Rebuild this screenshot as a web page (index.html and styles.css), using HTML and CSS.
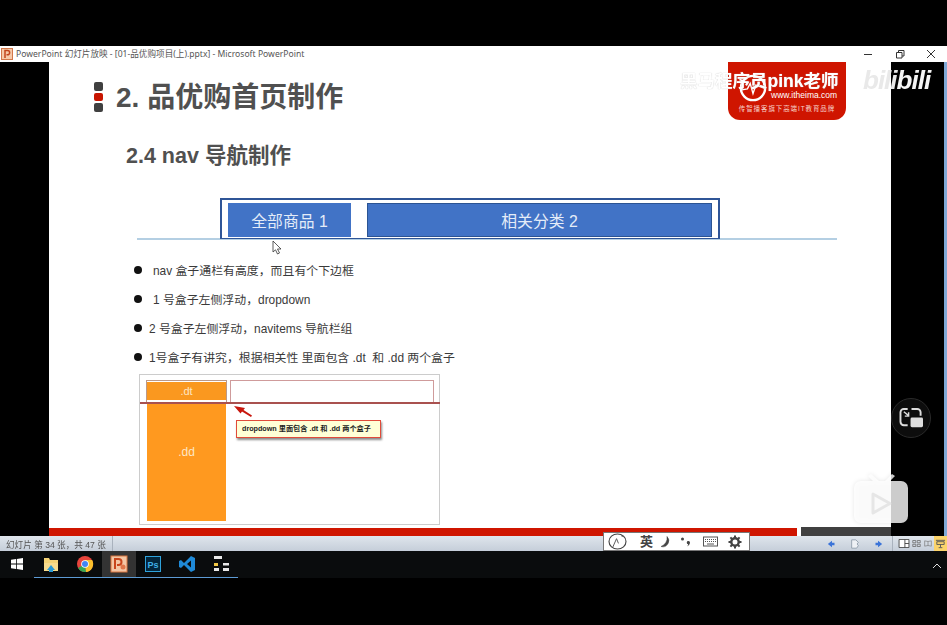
FILE: index.html
```html
<!DOCTYPE html>
<html lang="zh-CN">
<head>
<meta charset="utf-8">
<title>PowerPoint 幻灯片放映</title>
<link rel="stylesheet" href="styles.css">
</head>
<body>
<div class="screen">
  <div class="window">
    <header class="titlebar">
      <svg class="ppt-icon" viewBox="0 0 12 12"><rect x=".5" y=".5" width="11" height="11" fill="#f6c9a8" stroke="#d2774a"/><path d="M4 10V2.500h2.500a2 2 0 0 1 0 4.300H5.500" fill="none" stroke="#c2451c" stroke-width="1.500"/></svg>
      <span class="title-text">PowerPoint 幻灯片放映 - [01-品优购项目(上).pptx] - Microsoft PowerPoint</span>
      <div class="win-controls">
        <svg viewBox="0 0 10 10" class="win-btn"><path d="M1 5.500h8" stroke="#333" stroke-width="1"/></svg>
        <svg viewBox="0 0 10 10" class="win-btn"><path d="M1.500 3.500h5.500v5.500H1.500zM3.500 3.500V1.500H9v5.500H7" fill="none" stroke="#333"/></svg>
        <svg viewBox="0 0 10 10" class="win-btn"><path d="M1 1l8 8M9 1l-8 8" stroke="#333"/></svg>
      </div>
    </header>

    <div class="stage">
      <main class="slide">
        <div class="slide-head">
          <div class="marks"><i class="mark"></i><i class="mark mark-red"></i><i class="mark"></i></div>
          <h1 class="slide-title">2. 品优购首页制作</h1>
        </div>
        <h2 class="slide-sub">2.4 nav 导航制作</h2>

        <div class="nav-box">
          <div class="nav-item nav-item-a">全部商品 1</div>
          <div class="nav-item nav-item-b">相关分类 2</div>
        </div>
        <div class="rule"></div>

        <ul class="points">
          <li class="point point-wide">nav 盒子通栏有高度，而且有个下边框</li>
          <li class="point point-wide">1 号盒子左侧浮动，dropdown</li>
          <li class="point">2 号盒子左侧浮动，navitems 导航栏组</li>
          <li class="point">1号盒子有讲究，根据相关性 里面包含 .dt&nbsp; 和 .dd 两个盒子</li>
        </ul>

        <div class="diagram">
          <div class="diagram-top">
            <div class="dt-cell"><span class="dt">.dt</span></div>
            <div class="empty-cell"></div>
          </div>
          <div class="dd">.dd</div>
          <svg class="arrow" viewBox="0 0 19 12"><path d="M0 0L11 2 9.500 4 18 9.500 17 11 8 5.500 6.500 7.500z" fill="#c8170d"/></svg>
          <div class="callout">dropdown 里面包含 .dt 和 .dd 两个盒子</div>
        </div>

        <div class="slide-foot">
          <div class="foot-red"></div>
          <div class="foot-dark"></div>
        </div>

        <div class="logo">
          <div class="logo-row">
            <svg class="logo-mark" viewBox="0 0 30 30"><circle cx="15" cy="15" r="13" fill="none" stroke="#fff" stroke-width="2.500"/><path d="M3 17l6-1 3-6 3 11 3-9 9 3" fill="none" stroke="#fff" stroke-width="1.500"/></svg>
            <div class="logo-url">www.itheima.com</div>
          </div>
          <div class="logo-slogan">传智播客旗下高端IT教育品牌</div>
        </div>
      </main>
      <div class="side"></div>
      <div class="edge"></div>
    </div>

    <footer class="statusbar">
      <span class="status-text">幻灯片 第 34 张，共 47 张</span>
      <i class="status-sep"></i>
      <div class="status-right">
        <svg class="st-ico" viewBox="0 0 12 12"><path d="M1 6l5-4v2.500h3v3H6V10z" fill="#3b74d8"/></svg>
        <svg class="st-ico st-gap" viewBox="0 0 12 12"><path d="M2 1h5l3 3-1.500 2L10 8 8 11H2z" fill="#eef1f5" stroke="#8a97a6"/></svg>
        <svg class="st-ico st-gap" viewBox="0 0 12 12"><path d="M11 6L6 2v2.500H3v3h3V10z" fill="#3b74d8"/></svg>
        <i class="status-sep status-sep-r"></i>
        <svg class="st-view st-view-a" viewBox="0 0 12 10"><path d="M.5.500h11v9H.500zM7 .5v9M7 5h4.500" fill="#fff" stroke="#444"/></svg>
        <svg class="st-view st-view-b" viewBox="0 0 12 10"><path d="M1 1h4v3H1zM7 1h4v3H7zM1 6h4v3H1zM7 6h4v3H7z" fill="none" stroke="#666"/></svg>
        <svg class="st-view st-view-c" viewBox="0 0 12 10"><path d="M1 1l5 1 5-1v8L6 8 1 9zM6 2v6" fill="none" stroke="#777"/></svg>
        <div class="st-active"><svg viewBox="0 0 12 10"><path d="M1 1h10M2 2.500h8v3H2zM6 5.500v3M4 9h4" fill="none" stroke="#555"/></svg></div>
      </div>
    </footer>

    <nav class="taskbar">
      <div class="task task-start"><svg viewBox="0 0 12 12" class="t-ico-s"><path d="M0 1.800L5 1v4.600H0zM5.800.9L12 0v5.600H5.800zM0 6.400h5V11l-5-.8zM5.800 6.400H12V12l-6.200-.9z" fill="#fff"/></svg></div>
      <div class="task task-on"><svg viewBox="0 0 18 18" class="t-ico"><path d="M2 3h5l1 2h8v11H2z" fill="#f4d375"/><path d="M2 8h14v8H2z" fill="#f7dc8d"/><path d="M5 15l4-5 4 5z" fill="#2a9ad6"/><path d="M7 15h4v2H7z" fill="#2a9ad6"/></svg></div>
      <div class="task task-on"><svg viewBox="0 0 18 18" class="t-ico"><circle cx="9" cy="9" r="8" fill="#e8453c"/><path d="M9 9L2.100 13A8 8 0 0 0 10 17z" fill="#34a853"/><path d="M9 5h7.100A8 8 0 0 1 10 17z" fill="#fbc02d"/><circle cx="9" cy="9" r="3.800" fill="#fff"/><circle cx="9" cy="9" r="3" fill="#4285f4"/></svg></div>
      <div class="task task-on task-active"><svg viewBox="0 0 18 18" class="t-ico"><rect x="1" y="1" width="16" height="16" fill="#f3c6a5" stroke="#d8743f"/><path d="M5 14V4h3.500a3 3 0 0 1 0 6H7" fill="none" stroke="#c8451b" stroke-width="2"/><circle cx="13" cy="12" r="2.500" fill="#e0764a"/></svg></div>
      <div class="task task-on"><svg viewBox="0 0 18 18" class="t-ico"><rect x="1.500" y="1.500" width="15" height="15" fill="#03263c" stroke="#2fa3dc"/><text x="9" y="13" class="ps-text">Ps</text></svg></div>
      <div class="task task-on"><svg viewBox="0 0 18 18" class="t-ico"><path d="M13 1l4 2v12l-4 2-7-7-3 3-2-1V6l2-1 3 3zM13 5.500L9 9l4 3.500z" fill="#1f8ad8" fill-rule="evenodd"/></svg></div>
      <div class="task task-on"><svg viewBox="0 0 18 18" class="t-ico"><path d="M2 1h8v3H2zM2 13h5v3H2zM11 8h6v2.500h-6zM11 13h6v3h-6z" fill="#e8e8e8"/><path d="M2 8h4v3H2z" fill="#f2c744"/></svg></div>
      <svg class="tray-chevron" viewBox="0 0 10 6"><path d="M1 5l4-4 4 4" fill="none" stroke="#ddd"/></svg>
    </nav>
  </div>

  <div class="watermark">黑马程序员pink老师</div>
  <div class="bili"><span class="bili-a">bili</span><span class="bili-b">bili</span></div>

  <div class="pip">
    <svg viewBox="0 0 26 24" class="pip-ico"><path d="M9 2H5a3.500 3.500 0 0 0-3.500 3.500v10A3.500 3.500 0 0 0 5 19h4M13 2h6a3.500 3.500 0 0 1 3.500 3.500V9" fill="none" stroke="#ddd" stroke-width="2"/><path d="M5 5l5 4M10 5.500V9.500H6" fill="none" stroke="#ddd" stroke-width="1.500"/><rect x="12" y="11" width="13" height="10" rx="1.500" fill="#ddd"/></svg>
  </div>
  <svg class="tv" viewBox="0 0 54 50"><path d="M14 2l3-2 8 7h6l7-7 3 2-5 5h11a7 7 0 0 1 7 7v28a7 7 0 0 1-7 7H7a7 7 0 0 1-7-7V14a7 7 0 0 1 7-7h12z" fill="rgba(255,255,255,.8)"/><path d="M19 20l17 9.500L19 39z" fill="none" stroke="rgba(225,225,225,.8)" stroke-width="3" stroke-linejoin="round"/></svg>

  <svg class="cursor" viewBox="0 0 10 15"><path d="M1 1v11l2.500-2.200L5.500 14l2-1-2-4h3.500z" fill="#fff" stroke="#333" stroke-width=".8"/></svg>

  <div class="ime">
    <svg class="ime-logo" viewBox="0 0 20 18"><ellipse cx="10" cy="9" rx="9" ry="8" fill="none" stroke="#444" stroke-width="1.200"/><path d="M5 15L9 6l2 5M14 3l3 1" fill="none" stroke="#555"/></svg>
    <span class="ime-lang">英</span>
    <svg class="ime-ico" viewBox="0 0 12 12"><path d="M7 .5A6 6 0 0 1 1 10.500 9 9 0 0 0 7 .5z" fill="#444" stroke="#444" stroke-width=".5"/></svg>
    <svg class="ime-ico ime-semi" viewBox="0 0 12 12"><circle cx="2.500" cy="3" r="1.500" fill="#444"/><path d="M8.500 5a1.600 1.600 0 0 1 1.500 1.600C10 8.500 8.500 10 7 10.500c.8-.8 1.200-1.600 1.200-2.300A1.600 1.600 0 0 1 8.500 5z" fill="#444"/></svg>
    <svg class="ime-key" viewBox="0 0 15 10"><rect x=".5" y=".5" width="14" height="9" fill="none" stroke="#555"/><path d="M2 3h11M2 5h11" stroke="#555" stroke-dasharray="1 1"/><path d="M4 7.500h7" stroke="#555"/></svg>
    <svg class="ime-gear" viewBox="0 0 14 14"><circle cx="7" cy="7" r="3.700" fill="none" stroke="#444" stroke-width="2.400"/><path d="M7 .5v2.500M7 11v2.500M.5 7H3M11 7h2.500M2.400 2.400l1.800 1.800M9.800 9.800l1.800 1.800M2.400 11.600l1.800-1.800M9.800 4.200l1.800-1.800" stroke="#444" stroke-width="2"/></svg>
  </div>
</div>
</body>
</html>
```

FILE: styles.css
```css
* { box-sizing: border-box; }
html, body { margin: 0; padding: 0; background: #000; }
body { width: 947px; height: 625px; overflow: hidden; }
.screen {
  position: relative;
  width: 947px;
  height: 625px;
  padding-top: 46px;
  background: #000;
  overflow: hidden;
  font-family: "Liberation Sans", "Noto Sans CJK SC", sans-serif;
}
.window { display: flex; flex-direction: column; filter: blur(.45px); }

/* title bar */
.titlebar {
  height: 16px;
  display: flex;
  align-items: center;
  background: #fff;
  padding-left: 1px;
}
.ppt-icon { width: 12px; height: 12px; }
.title-text {
  margin-left: 3px;
  font: 8.600px/16px "Noto Sans", "Noto Sans CJK SC", sans-serif;
  color: #555;
  white-space: nowrap;
}
.win-controls { margin-left: auto; display: flex; gap: 21.500px; padding-right: 11px; }
.win-btn { width: 10px; height: 10px; }

/* stage */
.stage { display: flex; height: 474px; padding-left: 49px; }
.slide {
  position: relative;
  width: 842px;
  height: 474px;
  background: #fff;
  display: flex;
  flex-direction: column;
}
.side { width: 53px; background: #000; }
.edge { width: 3px; background: #7fa9d6; }

.slide-head { display: flex; align-items: center; margin: 20px 0 0 45px; height: 30px; }
.marks { display: flex; flex-direction: column; gap: 2px; }
.mark { width: 9px; height: 8.500px; border-radius: 2px; background: #404040; }
.mark-red { background: #c81500; }
.slide-title {
  margin: 2px 0 0 13px;
  font-size: 28px;
  line-height: 30px;
  font-weight: 700;
  color: #505050;
  white-space: nowrap;
}
.slide-sub {
  margin: 32px 0 0 77px;
  font-size: 21.500px;
  line-height: 24px;
  font-weight: 700;
  color: #505050;
}

.nav-box {
  margin: 30px 0 0 171px;
  width: 500px;
  height: 41px;
  border: 2px solid #2f5597;
  border-bottom-width: 1px;
  background: #fff;
  display: flex;
  gap: 16px;
  padding: 3px 6px 1px 6px;
  position: relative;
  z-index: 1;
}
.nav-item {
  display: flex;
  align-items: center;
  justify-content: center;
  color: #e4ecf8;
  font-size: 15.800px;
  background: #4173c6;
}
.nav-item-a { width: 123px; }
.nav-item-b { width: 345px; border: 1.500px solid #2b5493; }
.rule { margin: -1px 0 0 88px; width: 700px; height: 2px; background: #b4cfe3; }

.points { list-style: none; margin: 17px 0 0 85px; padding: 0; }
.point {
  position: relative;
  height: 29px;
  padding-left: 15px;
  font-size: 11.900px;
  line-height: 29px;
  color: #3a3a3a;
  white-space: nowrap;
}
.point::before {
  content: "";
  position: absolute;
  left: 0;
  top: 9px;
  width: 8px;
  height: 8px;
  border-radius: 50%;
  background: #111;
}
.point-wide { padding-left: 19px; }

.diagram {
  position: relative;
  margin: 1px 0 0 90px;
  width: 301px;
  height: 151px;
  border: 1px solid #ccc;
  background: #fff;
  padding-top: 5px;
}
.diagram-top {
  display: flex;
  gap: 3px;
  padding-left: 6px;
  height: 24px;
  border-bottom: 2px solid #a9514f;
  margin-right: -1px;
}
.dt-cell {
  width: 81px;
  height: 22px;
  border: 1px solid #b98;
  border-bottom: 0;
  padding: 1px 0;
}
.dt {
  display: block;
  height: 18px;
  background: #fa981f;
  color: #fde6c4;
  font-size: 11px;
  line-height: 18px;
  text-align: center;
}
.empty-cell { width: 204px; height: 22px; border: 1px solid #cf9b9b; border-bottom: 0; }
.dd {
  margin: 0 0 0 7px;
  width: 79px;
  height: 117px;
  background: #ff991f;
  color: #fde6c4;
  font-size: 12px;
  line-height: 96px;
  text-align: center;
}
.arrow { position: absolute; left: 94px; top: 31px; width: 19px; height: 12px; }
.callout {
  position: absolute;
  left: 96px;
  top: 45px;
  width: 145px;
  height: 18px;
  border: 1px solid #e04b3a;
  background: #ffffd6;
  box-shadow: 1px 2px 2px rgba(0,0,0,.45);
  font-size: 7.200px;
  font-weight: 700;
  line-height: 16px;
  padding-left: 5px;
  color: #222;
  white-space: nowrap;
}

.slide-foot { margin-top: auto; display: flex; align-items: flex-end; gap: 4px; }
.foot-red { width: 748px; height: 8px; background: #cf1500; }
.foot-dark { width: 90px; height: 9px; background: #404040; }

.logo {
  position: absolute;
  left: 679px;
  top: 0;
  width: 118px;
  height: 58px;
  background: #cf1500;
  border-radius: 0 0 12px 12px;
  color: #fff;
  padding-top: 18px;
}
.logo-row { display: flex; align-items: center; padding-left: 11px; height: 22px; }
.logo-mark { width: 28px; height: 28px; margin-top: -6px; flex: none; }
.logo-url { margin: 8px 0 0 4px; font-size: 8.500px; white-space: nowrap; }
.logo-slogan { font-size: 6.500px; letter-spacing: .9px; text-align: center; margin-top: 2px; color: #f6cfc8; white-space: nowrap; line-height: 10px; }

/* status bar */
.statusbar {
  height: 15px;
  display: flex;
  align-items: center;
  background: linear-gradient(#dfe5ec, #c5ced9);
  padding-left: 6px;
}
.status-text { font-size: 8.600px; color: #555; white-space: nowrap; width: 106px; }
.status-sep { width: 1px; height: 15px; background: #a9b2bd; }
.status-right { margin-left: auto; display: flex; align-items: center; }
.st-ico { width: 10px; height: 10px; }
.st-gap { margin-left: 13px; }
.status-sep-r { margin: 0 5px 0 9px; }
.st-view { height: 9px; }
.st-view-a { width: 12px; margin-right: 2px; }
.st-view-b { width: 9px; margin-right: 3px; }
.st-view-c { width: 8px; margin-right: 2px; }
.st-active { width: 13px; height: 15px; background: #fbd36a; display: flex; align-items: center; justify-content: center; }
.st-active svg { width: 11px; height: 10px; }

/* task bar */
.taskbar {
  position: relative;
  height: 27px;
  display: flex;
  background: #0a0c0d;
  padding-left: 0;
}
.task { width: 34px; height: 27px; display: flex; align-items: center; justify-content: center; border-bottom: 1px solid transparent; }
.task-start { width: 34px; }
.task-on { border-bottom-color: #5d9bd5; }
.task-active { background: #333; }
.t-ico { width: 18px; height: 18px; }
.t-ico-s { width: 12px; height: 12px; }
.ps-text { font: 700 9px "Liberation Sans", sans-serif; fill: #3fb0e8; text-anchor: middle; }
.tray-chevron { position: absolute; left: 932px; top: 12px; width: 10px; height: 6px; }

/* overlays */
.watermark {
  position: absolute;
  left: 680px;
  top: 69px;
  font-size: 17.500px;
  line-height: 24px;
  font-weight: 700;
  color: #fff;
  text-shadow: 0 0 1px #bbb;
  white-space: nowrap;
}
.bili {
  position: absolute;
  left: 863px;
  top: 62px;
  font: italic 700 26px/36px "Liberation Sans", sans-serif;
  letter-spacing: -1px;
  white-space: nowrap;
  display: flex;
}
.bili-a { color: #e9e9e9; }
.bili-b { color: #f5f5f5; }
.pip {
  position: absolute;
  left: 891px;
  top: 398px;
  width: 40px;
  height: 40px;
  border-radius: 50%;
  background: #0d0d0d;
  border: 1px solid #2a2a2a;
  display: flex;
  align-items: center;
  justify-content: center;
}
.pip-ico { width: 25px; height: 23px; }
.tv {
  position: absolute;
  left: 854px;
  top: 474px;
  width: 54px;
  height: 50px;
  filter: drop-shadow(0 0 2px rgba(0,0,0,.12));
}
.cursor { position: absolute; left: 272px; top: 240px; width: 10px; height: 15px; }
.ime {
  position: absolute;
  left: 603px;
  top: 532px;
  width: 147px;
  height: 19px;
  background: #fff;
  border: 1px solid #777;
  display: flex;
  align-items: center;
  padding-left: 4px;
}
.ime-logo { width: 19px; height: 17px; }
.ime-lang { margin-left: 13px; font-size: 13px; font-weight: 700; color: #444; line-height: 17px; }
.ime-ico { width: 12px; height: 12px; margin-left: 7px; }
.ime-semi { margin-left: 8px; }
.ime-key { width: 15px; height: 11px; margin-left: 11px; }
.ime-gear { width: 14px; height: 14px; margin-left: 10px; }
```
